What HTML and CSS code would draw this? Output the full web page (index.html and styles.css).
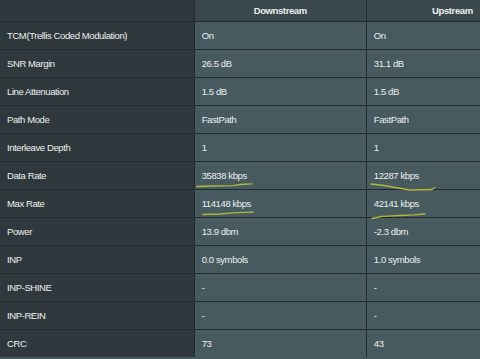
FILE: index.html
```html
<!DOCTYPE html>
<html>
<head>
<meta charset="utf-8">
<link rel="stylesheet" href="styles.css">
</head>
<body>
<div class="wrap">
<table class="stats">
  <colgroup><col class="c-label"><col class="c-val"><col class="c-val"></colgroup>
  <thead>
    <tr><th class="corner"></th><th>Downstream</th><th>Upstream</th></tr>
  </thead>
  <tbody>
    <tr><td class="label">TCM(Trellis Coded Modulation)</td><td>On</td><td>On</td></tr>
    <tr><td class="label">SNR Margin</td><td>26.5 dB</td><td>31.1 dB</td></tr>
    <tr><td class="label">Line Attenuation</td><td>1.5 dB</td><td>1.5 dB</td></tr>
    <tr><td class="label">Path Mode</td><td>FastPath</td><td>FastPath</td></tr>
    <tr><td class="label">Interleave Depth</td><td>1</td><td>1</td></tr>
    <tr><td class="label">Data Rate</td><td>35838 kbps</td><td>12287 kbps</td></tr>
    <tr><td class="label">Max Rate</td><td>114148 kbps</td><td>42141 kbps</td></tr>
    <tr><td class="label">Power</td><td>13.9 dbm</td><td>-2.3 dbm</td></tr>
    <tr><td class="label">INP</td><td>0.0 symbols</td><td>1.0 symbols</td></tr>
    <tr><td class="label">INP-SHINE</td><td>-</td><td>-</td></tr>
    <tr><td class="label">INP-REIN</td><td>-</td><td>-</td></tr>
    <tr><td class="label">CRC</td><td>73</td><td>43</td></tr>
  </tbody>
</table>
<svg class="marks" width="480" height="359" viewBox="0 0 480 359">
  <g fill="none" stroke="#b3b636" stroke-width="1.3" stroke-linecap="round" stroke-linejoin="round">
    <path d="M197 186.5 L215 186 L233 185.6 L240 184.5 L252 183.8"/>
    <path d="M203 214.5 L220 214 L232 212.8 L245 212.3 L253 212"/>
    <path d="M371 184 L384 185.5 L398 188 L410 190 L432 189.5 L435 187.5"/>
    <path d="M372 218.5 L382 216.3 L400 215.5 L414 214.8 L425 214"/>
  </g>
</svg>
</div>
</body>
</html>
```

FILE: styles.css
```css
html, body {
  margin: 0;
  padding: 0;
  background: #475a60;
  overflow: hidden;
}
.wrap {
  position: relative;
  width: 480px;
  height: 359px;
  overflow: hidden;
}
.stats {
  border-collapse: collapse;
  table-layout: fixed;
  width: 539px;
  font-family: "Liberation Sans", Arial, sans-serif;
  font-size: 9.5px;
  letter-spacing: -0.4px;
  color: #eceeee;
}
.c-label { width: 194px; }
.c-val { width: 172px; }
.stats th {
  height: 21px;
  padding: 0 7px;
  background: #3a474c;
  font-weight: bold;
  text-align: center;
  border: 1px solid #222b2e;
  border-top: none;
}
.stats th.corner {
  background: #2f393d;
  border-left: none;
}
.stats td {
  height: 27px;
  padding: 0 7px;
  background: #475a60;
  border: 1px solid #222b2e;
  vertical-align: middle;
  white-space: nowrap;
}
.stats td.label {
  background: #2f393d;
  border-left: none;
}
.stats tr:last-child td {
  border-bottom: none;
}
.marks {
  position: absolute;
  left: 0;
  top: 0;
  pointer-events: none;
}
```
